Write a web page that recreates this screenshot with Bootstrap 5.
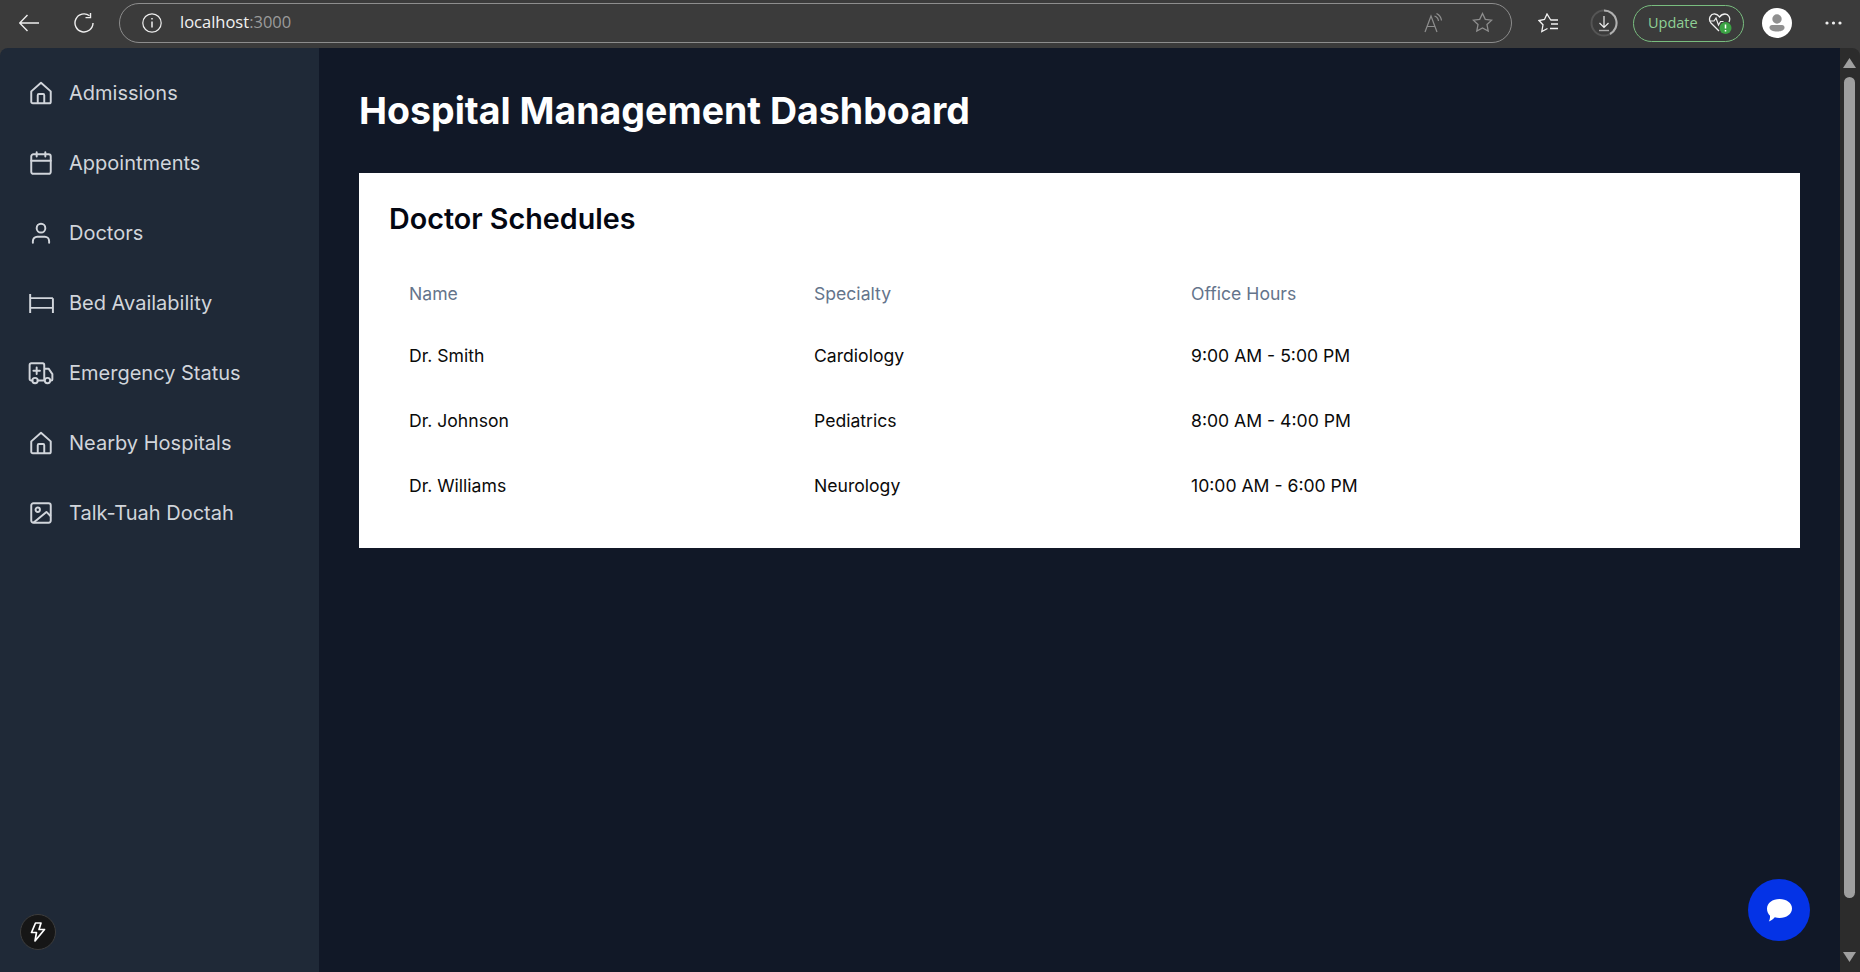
<!doctype html>
<html lang="en">
<head>
<meta charset="utf-8">
<title>Hospital Management Dashboard</title>
<link rel="stylesheet" href="https://cdn.jsdelivr.net/npm/bootstrap@5.3.0/dist/css/bootstrap.min.css">
<style>
html,body{height:972px;overflow:hidden;margin:0}
body{background:#3b3b3b;font-family:Inter,"Liberation Sans",sans-serif}
.chrome-bar{height:48px;padding-left:19px;padding-bottom:2px;color:#e8e8e8}
.chrome-bar svg{display:block;flex:none}
.reload-ic{margin-left:35px}
.addr-box{width:1393px;height:40px;margin-left:25px;margin-top:-1px;border:1.5px solid #8d8d8d;border-radius:20px;padding-left:22px;padding-right:18px;flex:none}
.addr-text{margin-left:18px;font:16.5px/1 "Open Sans","Noto Sans",sans-serif;color:#f2f2f2}
.addr-text span{color:#9a9a9a}
.read-ic{margin-left:auto}
.star-ic{margin-left:28px}
.fav-ic{margin-left:26px}
.dl-ic{margin-left:31px}
.update-pill{width:111px;height:37px;margin-left:15px;border:1.5px solid #79bd7f;border-radius:19px;padding-left:14px;color:#8fd096;font:14.5px/1 "Open Sans","Noto Sans",sans-serif;flex:none}
.update-pill svg{margin-left:10px}
.avatar-ic{margin-left:18px}
.dots-ic{margin-left:33px}
.app-area{height:924px;border-radius:8px 8px 0 0;overflow:hidden}
.side-col{width:319px;background:#1f2937;flex:none;padding-top:10px}
.side-link{height:70px;padding-left:28px;color:#d1d5db;font-size:20px;font-weight:400;text-decoration:none}
.side-link svg{width:26px;height:26px;margin-right:15px;flex:none}
.bolt-btn{left:20px;bottom:22px;width:36px;height:36px;background:#161616;border:1px solid #3d3d3d}
.main-col{background:#111827;padding:43px 40px 0}
.page-title{font-size:37.5px;line-height:40px;font-weight:700;color:#fff;margin:0 0 42px}
.sched-card{height:375px;background:#fff;padding:30px;border-radius:0;border:0}
.sched-title{font-size:28.7px;line-height:32px;font-weight:600;color:#030712;margin:0 0 29px}
.sched-table{width:1380px;table-layout:fixed;margin:0;--bs-table-bg:transparent}
.sched-table th,.sched-table td{border:0;padding:0 20px;vertical-align:middle;font-size:17.6px;box-shadow:none}
.sched-table th{height:60px;font-weight:400;color:#64748b}
.sched-table td{height:65px;font-weight:400;color:#0a0a0a}
.col-a{width:405px}.col-b{width:377px}
.chat-btn{right:30px;bottom:31px;width:62px;height:62px;background:#0433e6}
.scroll-col{width:20px;background:#2c2c2c;flex:none;padding:10px 1px 10px 0}
.scroll-thumb{width:11px;height:821px;margin:9px auto auto;background:#9f9f9f;border-radius:6px}
</style>
</head>
<body>
<header class="chrome-bar d-flex align-items-center">
  <svg width="20" height="20" viewBox="0 0 20 20" fill="none" stroke="#eee" stroke-width="1.4"><path d="M0.5 10H20M8.5 2 0.700 10l7.800 8"/></svg>
  <svg class="reload-ic" width="20" height="20" viewBox="0 0 20 20" fill="none" stroke="#eee" stroke-width="1.4"><path d="M15.500 2.800A9 9 0 1 0 19 10"/><path d="M16.500 0v4.600h-5"/></svg>
  <div class="addr-box d-flex align-items-center">
    <svg width="20" height="20" viewBox="0 0 20 20" fill="none" stroke="#eee" stroke-width="1.2"><circle cx="10" cy="10" r="9.200"/><path d="M10 8.500v6M10 5v1.600" stroke-width="1.500"/></svg>
    <div class="addr-text">localhost<span>:3000</span></div>
    <svg class="read-ic" width="20" height="20" viewBox="0 0 20 20" fill="none" stroke="#8e8e8e" stroke-width="1.2"><path d="M1 19 7 3l6 16M3.200 13.500h7.600"/><path d="M10.500 3a6 6 0 0 1 4 5M12.500 .5a9 9 0 0 1 5 7"/></svg>
    <svg class="star-ic" width="21" height="21" viewBox="0 0 21 21" fill="none" stroke="#8e8e8e" stroke-width="1.3"><path d="m10.500 1.500 2.800 5.900 6.400.8-4.700 4.400 1.200 6.400-5.700-3.100-5.700 3.100L6 12.600 1.300 8.200l6.400-.8z"/></svg>
  </div>
  <svg class="fav-ic" width="21" height="20" viewBox="0 0 21 20" fill="none" stroke="#f2f2f2" stroke-width="1.3"><path d="M13 7.500 9 1 6.500 6.500 1 7.500l4 4.300L3.800 18.500 9.500 15.500M13 7h7M13 11h7M12 15.500h8"/></svg>
  <svg class="dl-ic" width="28" height="28" viewBox="0 0 28 28" fill="none"><circle cx="14" cy="14" r="12.500" stroke="#555" stroke-width="2"/><path d="M14 1.500A12.500 12.500 0 0 1 20 25" stroke="#b0b0b0" stroke-width="2"/><path d="M14 7v11M9.500 14l4.500 4.500 4.500-4.500" stroke="#eee" stroke-width="1.200"/><path d="M9 21.500h10" stroke="#aaa" stroke-width="1.400"/></svg>
  <div class="update-pill d-flex align-items-center">Update
    <svg width="24" height="24" viewBox="0 0 24 24" fill="none"><path d="M11 20 3 12C-.5 7.500 3 2.500 7 3c2 .2 3.500 1.500 4.500 3C13 4 15 3 17 3c3.500 0 6 4 4 8" stroke="#f0f0f0" stroke-width="1.300"/><path d="M1.500 10H6l2-3 2.500 7 2-3.500h3" stroke="#f0f0f0" stroke-width="1.200"/><circle cx="17.500" cy="17" r="6" fill="#3ba344"/><path d="M17.500 13.500v4M17.500 19v1.500" stroke="#fff" stroke-width="1.500"/></svg>
  </div>
  <svg class="avatar-ic" width="30" height="30" viewBox="0 0 30 30"><circle cx="15" cy="15" r="15" fill="#fff"/><circle cx="15" cy="11" r="4.700" fill="#8f8f8f"/><path d="M7.500 19.500c0-1.500 1-2.500 2.500-2.500h10c1.500 0 2.500 1 2.500 2.500 0 2.800-3.500 4-7.500 4s-7.500-1.200-7.500-4z" fill="#8f8f8f"/></svg>
  <svg class="dots-ic" width="17" height="4" viewBox="0 0 17 4" fill="#eee"><circle cx="2" cy="2" r="1.600"/><circle cx="8.500" cy="2" r="1.600"/><circle cx="15" cy="2" r="1.600"/></svg>
</header>
<div class="app-area d-flex">
  <nav class="side-col position-relative d-flex flex-column">
    <a class="side-link d-flex align-items-center" href="#"><svg viewBox="0 0 24 24" fill="none" stroke="#d1d5db" stroke-width="1.800" stroke-linejoin="round"><path d="M3 10.500 12 2.500l9 8V20a1.500 1.500 0 0 1-1.500 1.500h-15A1.500 1.500 0 0 1 3 20z"/><path d="M9 21.500V14a1 1 0 0 1 1-1h4a1 1 0 0 1 1 1v7.500"/></svg>Admissions</a>
    <a class="side-link d-flex align-items-center" href="#"><svg viewBox="0 0 24 24" fill="none" stroke="#d1d5db" stroke-width="1.800" stroke-linecap="round"><rect x="3" y="4" width="18" height="18" rx="2"/><path d="M16 2v4M8 2v4M3 10h18"/></svg>Appointments</a>
    <a class="side-link d-flex align-items-center" href="#"><svg viewBox="0 0 24 24" fill="none" stroke="#d1d5db" stroke-width="1.800" stroke-linecap="round"><circle cx="12" cy="7.500" r="4"/><path d="M4.500 21v-1.500a4 4 0 0 1 4-4h7a4 4 0 0 1 4 4V21"/></svg>Doctors</a>
    <a class="side-link d-flex align-items-center" href="#"><svg viewBox="0 0 24 24" fill="none" stroke="#d1d5db" stroke-width="1.800"><path d="M2 3.700v17.500M2 7.500h21M23 7.500v13.700M2 16.500h21"/></svg>Bed Availability</a>
    <a class="side-link d-flex align-items-center" href="#"><svg viewBox="0 0 24 24" fill="none" stroke="#d1d5db" stroke-width="1.800" stroke-linecap="round" stroke-linejoin="round"><path d="M4 19H3A1.500 1.500 0 0 1 1.500 17.500V4.500A1.500 1.500 0 0 1 3 3H13.500A1.500 1.500 0 0 1 15 4.500V19M9 19h6M15 8h4l3.500 5V18a1 1 0 0 1-1 1H21M8 7v6M5 10h6"/><circle cx="6.500" cy="19" r="2.500"/><circle cx="18" cy="19" r="2.500"/></svg>Emergency Status</a>
    <a class="side-link d-flex align-items-center" href="#"><svg viewBox="0 0 24 24" fill="none" stroke="#d1d5db" stroke-width="1.800" stroke-linejoin="round"><path d="M3 10.500 12 2.500l9 8V20a1.500 1.500 0 0 1-1.500 1.500h-15A1.500 1.500 0 0 1 3 20z"/><path d="M9 21.500V14a1 1 0 0 1 1-1h4a1 1 0 0 1 1 1v7.500"/></svg>Nearby Hospitals</a>
    <a class="side-link d-flex align-items-center" href="#"><svg viewBox="0 0 24 24" fill="none" stroke="#d1d5db" stroke-width="1.800" stroke-linejoin="round"><rect x="3" y="3" width="18" height="18" rx="2"/><circle cx="9" cy="9" r="2"/><path d="m21 15-4-4L5 21"/></svg>Talk-Tuah Doctah</a>
    <div class="bolt-btn position-absolute rounded-circle d-flex align-items-center justify-content-center">
      <svg width="16" height="20" viewBox="0 0 16 20" fill="none" stroke="#fff" stroke-width="1.700" stroke-linejoin="round"><path d="M5.500 1 1.500 10.500h5L5 19 14.500 7.500H9L11 1z"/></svg>
    </div>
  </nav>
  <main class="main-col flex-grow-1 position-relative">
    <h1 class="page-title">Hospital Management Dashboard</h1>
    <section class="sched-card card">
      <h2 class="sched-title">Doctor Schedules</h2>
      <table class="table sched-table">
        <thead><tr><th class="col-a">Name</th><th class="col-b">Specialty</th><th>Office Hours</th></tr></thead>
        <tbody>
          <tr><td>Dr. Smith</td><td>Cardiology</td><td>9:00 AM - 5:00 PM</td></tr>
          <tr><td>Dr. Johnson</td><td>Pediatrics</td><td>8:00 AM - 4:00 PM</td></tr>
          <tr><td>Dr. Williams</td><td>Neurology</td><td>10:00 AM - 6:00 PM</td></tr>
        </tbody>
      </table>
    </section>
    <div class="chat-btn position-absolute rounded-circle d-flex align-items-center justify-content-center">
      <svg width="27" height="25" viewBox="0 0 27 25" fill="#fff"><path d="M13.500 1C20.500 1 26 5 26 10.500S20.500 20 13.500 20c-1.700 0-3.200-.2-4.700-.7C7.500 21 5 23 2.800 23.500c.9-1.500 1.300-3.500 1.200-5.800C2 16 1 13.500 1 10.500 1 5 6.500 1 13.500 1z"/></svg>
    </div>
  </main>
  <aside class="scroll-col d-flex flex-column align-items-center">
    <svg width="13" height="10" viewBox="0 0 13 10" fill="#9f9f9f"><path d="M6.500 0 13 10H0z"/></svg>
    <div class="scroll-thumb"></div>
    <svg width="13" height="10" viewBox="0 0 13 10" fill="#9f9f9f"><path d="M6.500 10 13 0H0z"/></svg>
  </aside>
</div>
<script src="https://cdn.jsdelivr.net/npm/bootstrap@5.3.0/dist/js/bootstrap.bundle.min.js"></script>
</body>
</html>
